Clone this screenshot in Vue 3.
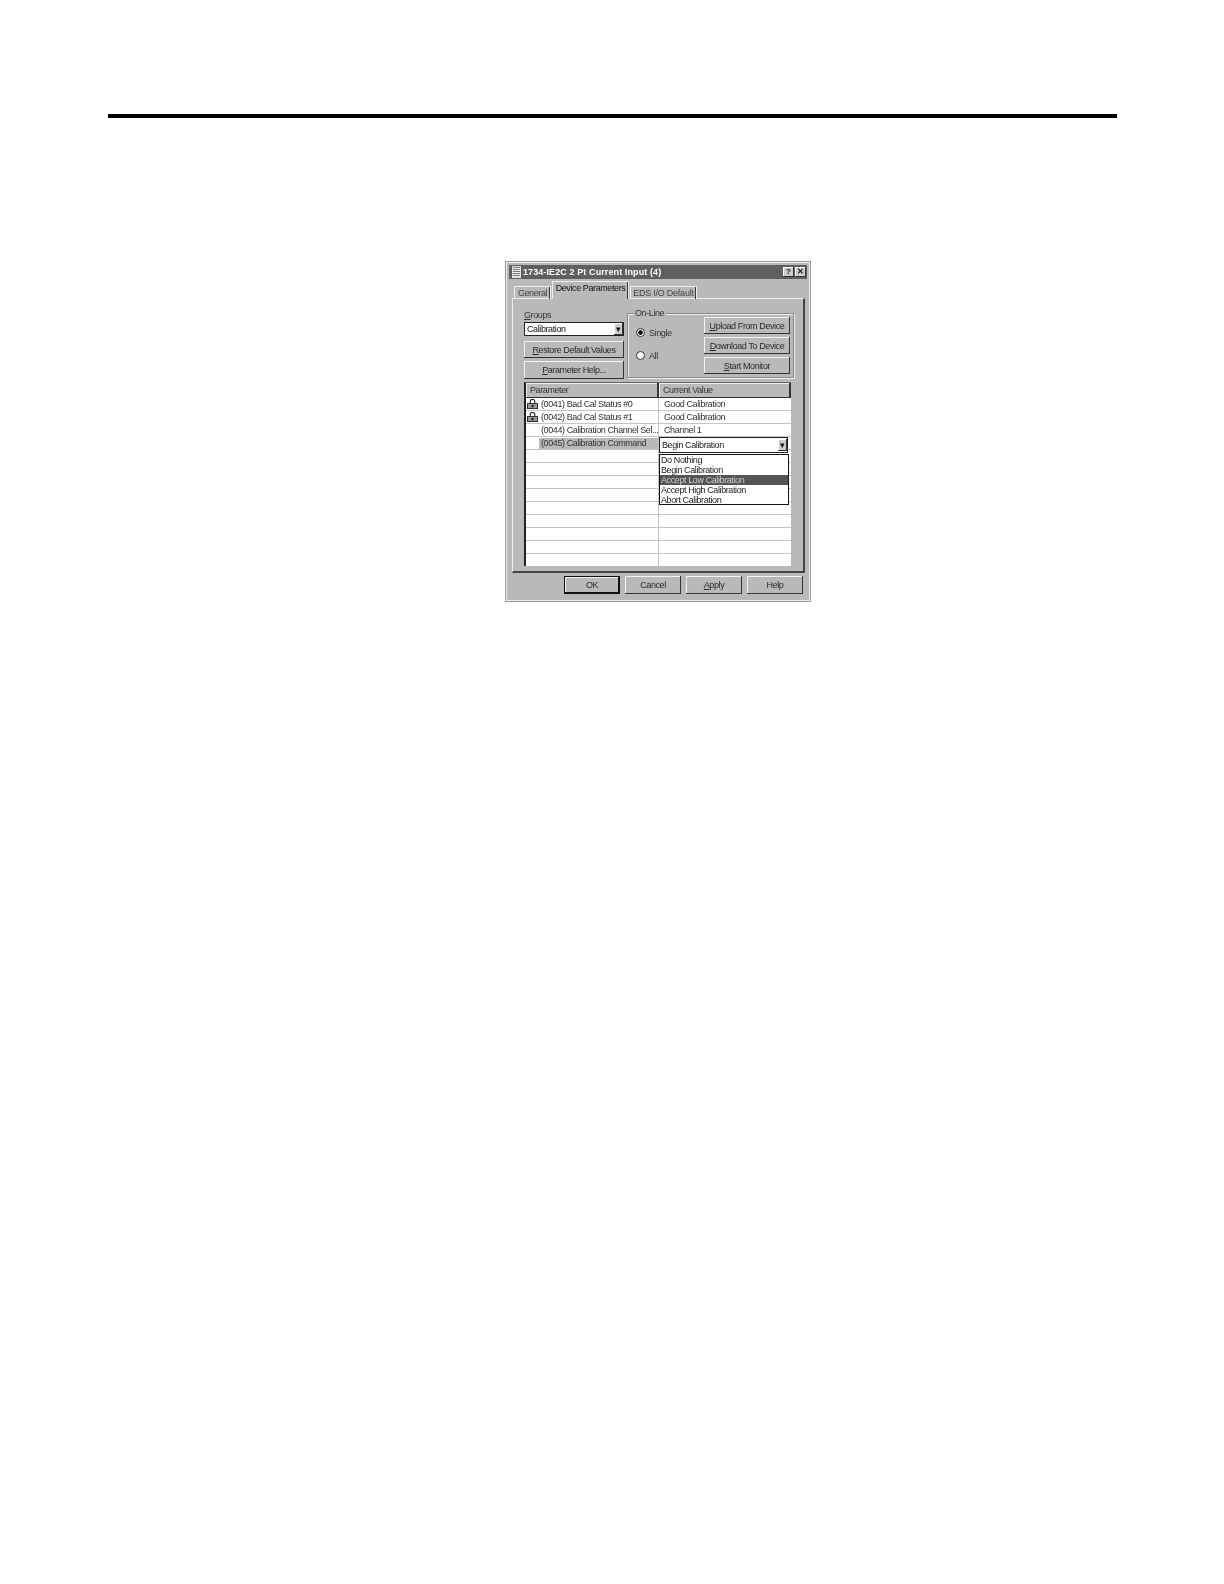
<template>
  <div class="page">
    <div class="rule"></div>
    <div class="dialog">
      <div class="titlebar">
        <span class="sysicon"></span>
        <span class="title">1734-IE2C 2 Pt Current Input (4)</span>
        <span class="capbtn">?</span>
        <span class="capbtn">✕</span>
      </div>
      <div class="tabs">
        <span class="tab first">General</span>
        <span class="tab active">Device Parameters</span>
        <span class="tab last">EDS I/O Default</span>
      </div>
      <div class="panel">
        <div class="toprow">
          <div class="leftcol">
            <div class="lbl"><u>G</u>roups</div>
            <div class="combo"><span>Calibration</span><span class="arrow">▾</span></div>
            <div class="btn restore"><span><u>R</u>estore Default Values</span></div>
            <div class="btn help"><span><u>P</u>arameter Help...</span></div>
          </div>
          <div class="online">
            <span class="legend">On-Line</span>
            <div class="radios">
              <div class="radio"><span class="dot on"></span>Single</div>
              <div class="radio"><span class="dot"></span>All</div>
            </div>
            <div class="onbtns">
              <div class="btn"><span><u>U</u>pload From Device</span></div>
              <div class="btn"><span><u>D</u>ownload To Device</span></div>
              <div class="btn"><span><u>S</u>tart Monitor</span></div>
            </div>
          </div>
        </div>
        <div class="grid">
          <div class="head">
            <div class="hcell c1">Parameter</div>
            <div class="hcell c2">Current Value</div>
          </div>
          <div v-for="(r, i) in rows" :key="i" class="row">
            <div class="cell c1">
              <svg v-if="r.lock" class="lock" viewBox="0 0 12 11" width="11" height="10">
                <path d="M3.500 5V2.500C3.500 1 4.500.5 6 .5s2.500.5 2.500 2V5" fill="none" stroke="#222" stroke-width="1.200"/>
                <rect x=".5" y="5" width="11" height="5.500" fill="#999" stroke="#222"/>
                <rect x="5" y="6.500" width="2" height="2.500" fill="#111"/>
              </svg>
              <span :class="['ptext', { sel: r.sel }]">{{ r.name }}</span>
            </div>
            <div class="cell c2 vtext">{{ r.value }}</div>
          </div>
          <div class="editor">
            <span>Begin Calibration</span><span class="arrow">▾</span>
          </div>
          <div class="droplist">
            <div v-for="o in options" :key="o" :class="['opt', { hi: o === 'Accept Low Calibration' }]">{{ o }}</div>
          </div>
        </div>
      </div>
      <div class="footer">
        <div class="btn fbtn def"><span>OK</span></div>
        <div class="btn fbtn"><span>Cancel</span></div>
        <div class="btn fbtn"><span><u>A</u>pply</span></div>
        <div class="btn fbtn"><span>Help</span></div>
      </div>
    </div>
  </div>
</template>

<script setup>
const rows = [
  { lock: true, name: '(0041) Bad Cal Status #0', value: 'Good Calibration' },
  { lock: true, name: '(0042) Bad Cal Status #1', value: 'Good Calibration' },
  { name: '(0044) Calibration Channel Sel...', value: 'Channel 1' },
  { name: '(0045) Calibration Command', value: '', sel: true },
  { name: '', value: '' }, { name: '', value: '' }, { name: '', value: '' },
  { name: '', value: '' }, { name: '', value: '' }, { name: '', value: '' },
  { name: '', value: '' }, { name: '', value: '' }, { name: '', value: '' },
]
const options = ['Do Nothing', 'Begin Calibration', 'Accept Low Calibration', 'Accept High Calibration', 'Abort Calibration']
</script>

<style>
html, body { background: #fff; }
</style>

<style scoped>
.page {
  width: 1224px;
  height: 1584px;
  background: #fff;
  padding-top: 114px;
  box-sizing: border-box;
  overflow: hidden;
  font-family: "Liberation Sans", Arial, sans-serif;
  color: #222;
}
.rule { height: 4px; margin: 0 107px 0 108px; background: #000; }
.dialog {
  margin: 144px 0 0 506px;
  width: 304px;
  height: 339px;
  box-sizing: border-box;
  background: #b9b9b9;
  border: 1px solid #eee;
  outline: 1px solid #999;
  padding: 2px 2px 0 2px;
  font-size: 9px;
  letter-spacing: -.4px;
  display: flex;
  flex-direction: column;
  filter: blur(.3px);
}
.titlebar {
  height: 14px;
  flex: none;
  background: #5f5f5f;
  color: #fff;
  display: flex;
  align-items: center;
  padding: 0 1px 0 4px;
}
.sysicon {
  width: 7px; height: 10px; margin-right: 3px;
  background: repeating-linear-gradient(0deg, #eee 0 1px, #777 1px 2px);
  outline: 1px solid #ddd;
}
.title { flex: 1; font-weight: 700; font-size: 9px; letter-spacing: .1px; white-space: nowrap; }
.capbtn {
  width: 11px; height: 10px; background: #ccc; color: #111; margin-left: 1px;
  font-size: 8px; font-weight: 700; line-height: 10px; text-align: center; letter-spacing: 0;
  box-shadow: inset -1px -1px 0 #333, inset 1px 1px 0 #fff;
}
.tabs {
  display: flex;
  align-items: flex-end;
  height: 20px;
  flex: none;
  padding-left: 5px;
  margin-bottom: -1px;
  position: relative;
  z-index: 1;
}
.tab {
  height: 12px;
  line-height: 13px;
  width: 35px;
  text-align: center;
  border: 1px solid #eee;
  border-bottom: none;
  box-shadow: inset -1px 0 0 #333;
  color: #444;
  white-space: nowrap;
  box-sizing: content-box;
}
.tab.active {
  height: 17px; line-height: 13px; width: 75px; background: #b9b9b9; color: #111;
  margin: 0 1px 0 1px;
}
.tab.last { width: 65px; letter-spacing: -.25px; }
.panel {
  flex: none;
  margin: 0 2px 0 3px;
  height: 275px;
  box-sizing: border-box;
  border: 1px solid #eee;
  border-right: 2px solid #444;
  border-bottom: 2px solid #444;
  padding: 11px 9px 0 11px;
}
.toprow { display: flex; gap: 3px; height: 72px; }
.leftcol { width: 100px; flex: none; display: flex; flex-direction: column; }
.lbl { height: 11px; line-height: 10px; color: #333; }
.combo {
  height: 14px; margin-top: 1px; box-sizing: border-box;
  background: #fff; border: 1px solid #222; color: #111;
  display: flex; align-items: center; justify-content: space-between; padding-left: 2px;
}
.arrow {
  width: 9px; height: 12px; background: #ccc; color: #111; font-size: 9px; line-height: 12px; text-align: center; letter-spacing: 0;
  box-shadow: inset -1px -1px 0 #333, inset 1px 1px 0 #fff;
}
.btn {
  background: #b9b9b9;
  box-shadow: inset -1px -1px 0 #333, inset 1px 1px 0 #f4f4f4;
  display: flex; align-items: center; justify-content: center;
  white-space: nowrap; color: #2a2a2a;
}
.restore { height: 17px; margin-top: 5px; }
.help { height: 18px; margin-top: 3px; }
.online {
  flex: none; width: 167px; height: 65px; margin-top: 3px; box-sizing: border-box; position: relative;
  border: 1px solid #8a8a8a; box-shadow: 1px 1px 0 #eee, inset 1px 1px 0 #eee;
  padding: 3px 3px 0 8px; display: flex; gap: 36px;
}
.legend {
  position: absolute; left: 5px; top: -5px; padding: 0 2px; background: #b9b9b9;
  line-height: 9px; color: #333;
}
.radios { display: flex; flex-direction: column; gap: 12px; padding-top: 10px; width: 32px; flex: none; }
.radio { display: flex; align-items: center; gap: 4px; height: 11px; color: #333; white-space: nowrap; }
.dot {
  width: 7px; height: 7px; border-radius: 50%; background: #fff; border: 1px solid #333; flex: none; box-sizing: content-box;
}
.dot.on { background: radial-gradient(circle, #000 0 2px, #fff 2.500px); }
.onbtns { flex: 1; display: flex; flex-direction: column; gap: 3px; }
.onbtns .btn { height: 17px; }
.grid {
  position: relative;
  margin-top: 0;
  width: 267px;
  height: 184px;
  overflow: hidden;
  background: #fff;
  border-left: 2px solid #222;
  border-top: 1px solid #666;
  box-sizing: border-box;
}
.head { display: flex; height: 15px; background: #b9b9b9; }
.hcell {
  box-shadow: inset -2px -1px 0 #333, inset 1px 1px 0 #eee;
  line-height: 14px; padding-left: 4px; box-sizing: border-box; color: #333;
}
.c1 { width: 133px; flex: none; }
.c2 { flex: 1; }
.row { display: flex; height: 13px; border-bottom: 1px solid #c4c4c4; box-sizing: border-box; }
.cell { line-height: 12px; white-space: nowrap; overflow: hidden; box-sizing: border-box; display: flex; align-items: center; color: #333; }
.cell.c1 { border-right: 1px solid #c4c4c4; padding-left: 15px; position: relative; }
.lock { position: absolute; left: 1px; top: 1px; }
.ptext.sel { background: #b9b9b9; flex: 1; display: block; line-height: 11px; margin-left: -2px; padding-left: 2px; }
.vtext { padding-left: 5px; }
.editor {
  position: absolute; left: 133px; top: 54px; width: 129px; height: 16px; box-sizing: border-box;
  background: #fff; border: 1px solid #222; padding-left: 2px; color: #222;
  display: flex; align-items: center; justify-content: space-between;
}
.droplist {
  position: absolute; left: 133px; top: 71px; width: 130px; height: 51px; box-sizing: border-box;
  background: #fff; border: 1px solid #111; color: #222;
}
.opt { height: 10px; line-height: 10px; padding-left: 1px; white-space: nowrap; }
.opt.hi { background: #555; color: #ccc; }
.footer { display: flex; justify-content: flex-end; gap: 5px; padding: 3px 4px 0 0; }
.fbtn { width: 56px; height: 18px; }
.fbtn.def { box-shadow: inset -2px -2px 0 #111, inset 1px 1px 0 #111, inset 2px 2px 0 #f4f4f4; }
</style>
